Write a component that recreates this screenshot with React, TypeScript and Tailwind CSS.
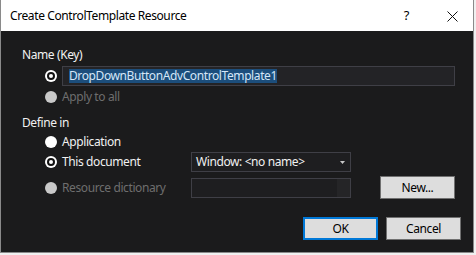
import React from "react";

const font = { fontFamily: '"Noto Sans", "Open Sans", sans-serif', letterSpacing: "-0.4px" };

function Radio({ state }: { state: "on" | "off" | "disabled" }) {
    if (state === "on") {
        return (
            <div className="w-[12px] h-[12px] rounded-full bg-white flex items-center justify-center">
                <div className="w-[8px] h-[8px] rounded-full border-2 border-[#111] bg-white" />
            </div>
        );
    }
    return <div className={`w-[12px] h-[12px] rounded-full ${state === "disabled" ? "bg-[#c9c9c9]" : "bg-white"}`} />;
}

function Button({ label, primary }: { label: string; primary?: boolean }) {
    return (
        <div
            className={`w-[75px] h-[23px] flex items-center justify-center bg-[#dddddd] text-[12px] text-black ${
                primary ? "border-2 border-[#0078d7]" : "border border-[#707070]"
            }`}>
            {label}
        </div>
    );
}

export default function App() {
    return (
        <div className="w-[476px] h-[255px] bg-[#f0f0f0]" style={font}>
            <div className="w-[474px] h-[253px] border-x border-b border-[#8a8a8a] flex flex-col bg-[#1b1b1c]">
                {/* Title bar */}
                <div className="h-[31px] bg-white flex items-center pl-[9px] pr-[15px] text-[12px] text-black">
                    <span>Create ControlTemplate Resource</span>
                    <span className="ml-auto mr-[38px] text-[13px]">?</span>
                    <svg width="11" height="11" viewBox="0 0 11 11" className="mt-[1px]">
                        <path d="M0.5 0.5 L10.5 10.5 M10.5 0.5 L0.5 10.5" stroke="#111" strokeWidth="1" />
                    </svg>
                </div>

                {/* Body */}
                <div className="flex flex-col pl-[21px] text-[12px] text-[#f1f1f1]">
                    <div className="h-[16px] mt-[16px] leading-[16px]">Name (Key)</div>

                    <div className="flex items-center h-[20px] mt-[3px]">
                        <div className="w-[40px] pl-[23px]">
                            <Radio state="on" />
                        </div>
                        <div className="w-[393px] h-[20px] bg-[#232326] border border-[#3f3f46] flex items-center pl-[6px]">
                            <span className="bg-[#1c4e7c] text-[#d4e6f8] leading-[14px]">DropDownButtonAdvControlTemplate1</span>
                        </div>
                    </div>

                    <div className="flex items-center h-[20px] mt-[1px]">
                        <div className="w-[40px] pl-[23px]">
                            <Radio state="disabled" />
                        </div>
                        <span className="text-[#6e6e6e]">Apply to all</span>
                    </div>

                    <div className="h-[16px] mt-[8px] leading-[16px]">Define in</div>

                    <div className="flex items-center h-[20px] mt-[1px]">
                        <div className="w-[40px] pl-[23px]">
                            <Radio state="off" />
                        </div>
                        <span>Application</span>
                    </div>

                    <div className="flex items-center h-[20px]">
                        <div className="w-[40px] pl-[23px]">
                            <Radio state="on" />
                        </div>
                        <span className="w-[129px]">This document</span>
                        <div className="w-[160px] h-[20px] bg-[#1e1e20] border border-[#3f3f46] flex items-center pl-[4px] pr-[5px]">
                            <span>Window: &lt;no name&gt;</span>
                            <svg width="5" height="3" viewBox="0 0 5 3" className="ml-auto">
                                <path d="M0 0 H5 L2.5 3 Z" fill="#c8c8c8" />
                            </svg>
                        </div>
                    </div>

                    <div className="flex items-center h-[23px] mt-[4px]">
                        <div className="w-[40px] pl-[23px]">
                            <Radio state="disabled" />
                        </div>
                        <span className="w-[129px] text-[#6e6e6e]">Resource dictionary</span>
                        <div className="w-[160px] h-[20px] bg-[#1e1e20] border border-[#3f3f46] flex justify-end">
                            <div className="w-[13px] h-full bg-[#252527]" />
                        </div>
                        <div className="ml-[29px]">
                            <Button label="New..." />
                        </div>
                    </div>

                    <div className="flex h-[23px] mt-[18px] pl-[281px] gap-[8px]">
                        <Button label="OK" primary />
                        <Button label="Cancel" />
                    </div>
                </div>
            </div>
        </div>
    );
}
